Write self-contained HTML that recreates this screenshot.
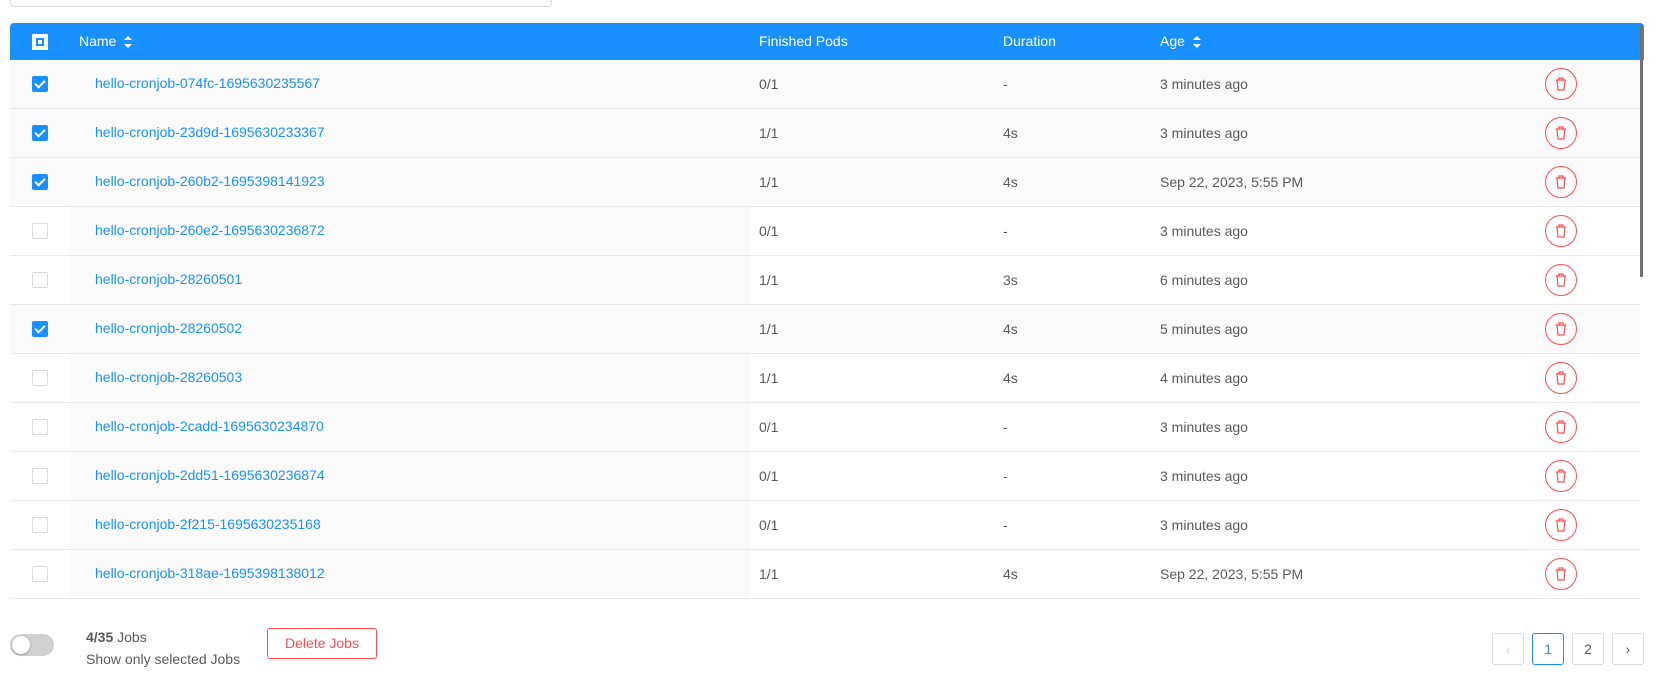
<!DOCTYPE html>
<html><head><style>
*{box-sizing:border-box;margin:0;padding:0}
body{width:1661px;height:685px;background:#fff;font-family:"Liberation Sans",sans-serif;font-size:14px;color:#595959;position:relative;overflow:hidden}
.abs{position:absolute}
.search{left:10px;top:-10px;width:542px;height:17px;border:1px solid #d9d9d9;border-radius:4px}
.head{left:10px;top:23px;width:1634px;height:37px;background:#1890ff;color:#fff;border-radius:4px 4px 0 0}
.head span{position:absolute;top:10px}
.hcb{position:absolute;left:22px;top:11px;width:16px;height:16px;background:#fff}
.hcb:after{content:"";position:absolute;left:4px;top:4px;width:8px;height:8px;border:2px solid #1890ff;box-sizing:border-box}
.sort{display:inline-block;vertical-align:middle;margin-left:8px;width:8px;height:12px;position:relative}
.sort:before,.sort:after{content:"";position:absolute;left:0;border-left:4px solid transparent;border-right:4px solid transparent}
.sort:before{top:0;border-bottom:4px solid #fff}
.sort:after{bottom:0;border-top:4px solid #fff}
.row{position:absolute;left:10px;width:1630px;height:49px;border-bottom:1px solid #e8e8e8}
.row .namebg{position:absolute;left:60px;width:680px;top:0;bottom:0;background:#fafafa}
.row.sel{background:#fafafa}
.row span{position:absolute;top:16px}
.row span.c1{left:749px}.row span.c2{left:993px}.row span.c3{left:1150px}
.cb{position:absolute;left:22px;top:16px;width:16px;height:16px;border:1px solid #d9d9d9;border-radius:2px;background:#fff}
.sel .cb{background:#1890ff;border-color:#1890ff}
.sel .cb:after{content:"";position:absolute;left:4px;top:1px;width:4px;height:8px;border:solid #fff;border-width:0 2px 2px 0;transform:rotate(45deg)}
.row span.name{left:85px;color:#1890ff;top:15px}
.trash{position:absolute;left:1535px;top:8px;width:32px;height:32px;border:1px solid #ff4d4f;border-radius:50%}
.pg{position:absolute;top:633px;width:32px;height:32px;border:1px solid #d9d9d9;border-radius:3px;text-align:center;line-height:30px;color:#595959}
.scroll{left:1640px;top:25px;width:3px;height:252px;background:#707070}
</style></head><body>
<div class="abs search"></div>
<div class="abs head"><div class="hcb"></div><span style="left:69px">Name<i class="sort"></i></span><span style="left:749px">Finished Pods</span><span style="left:993px">Duration</span><span style="left:1150px">Age<i class="sort"></i></span></div>
<div class="abs scroll"></div>

<div class="row sel" style="top:60px"><div class="cb"></div><span class="name">hello-cronjob-074fc-1695630235567</span><span class="c1">0/1</span><span class="c2">-</span><span class="c3">3 minutes ago</span><div class="trash"><svg width="30" height="30" viewBox="0 0 30 30"><path d="M10 11h10M13 11V9h4v2M11 11l1 10h6l1-10" fill="none" stroke="#ff4d4f" stroke-width="1.2"/></svg></div></div>
<div class="row sel" style="top:109px"><div class="cb"></div><span class="name">hello-cronjob-23d9d-1695630233367</span><span class="c1">1/1</span><span class="c2">4s</span><span class="c3">3 minutes ago</span><div class="trash"><svg width="30" height="30" viewBox="0 0 30 30"><path d="M10 11h10M13 11V9h4v2M11 11l1 10h6l1-10" fill="none" stroke="#ff4d4f" stroke-width="1.2"/></svg></div></div>
<div class="row sel" style="top:158px"><div class="cb"></div><span class="name">hello-cronjob-260b2-1695398141923</span><span class="c1">1/1</span><span class="c2">4s</span><span class="c3">Sep 22, 2023, 5:55 PM</span><div class="trash"><svg width="30" height="30" viewBox="0 0 30 30"><path d="M10 11h10M13 11V9h4v2M11 11l1 10h6l1-10" fill="none" stroke="#ff4d4f" stroke-width="1.2"/></svg></div></div>
<div class="row" style="top:207px"><div class="namebg"></div><div class="cb"></div><span class="name">hello-cronjob-260e2-1695630236872</span><span class="c1">0/1</span><span class="c2">-</span><span class="c3">3 minutes ago</span><div class="trash"><svg width="30" height="30" viewBox="0 0 30 30"><path d="M10 11h10M13 11V9h4v2M11 11l1 10h6l1-10" fill="none" stroke="#ff4d4f" stroke-width="1.2"/></svg></div></div>
<div class="row" style="top:256px"><div class="namebg"></div><div class="cb"></div><span class="name">hello-cronjob-28260501</span><span class="c1">1/1</span><span class="c2">3s</span><span class="c3">6 minutes ago</span><div class="trash"><svg width="30" height="30" viewBox="0 0 30 30"><path d="M10 11h10M13 11V9h4v2M11 11l1 10h6l1-10" fill="none" stroke="#ff4d4f" stroke-width="1.2"/></svg></div></div>
<div class="row sel" style="top:305px"><div class="cb"></div><span class="name">hello-cronjob-28260502</span><span class="c1">1/1</span><span class="c2">4s</span><span class="c3">5 minutes ago</span><div class="trash"><svg width="30" height="30" viewBox="0 0 30 30"><path d="M10 11h10M13 11V9h4v2M11 11l1 10h6l1-10" fill="none" stroke="#ff4d4f" stroke-width="1.2"/></svg></div></div>
<div class="row" style="top:354px"><div class="namebg"></div><div class="cb"></div><span class="name">hello-cronjob-28260503</span><span class="c1">1/1</span><span class="c2">4s</span><span class="c3">4 minutes ago</span><div class="trash"><svg width="30" height="30" viewBox="0 0 30 30"><path d="M10 11h10M13 11V9h4v2M11 11l1 10h6l1-10" fill="none" stroke="#ff4d4f" stroke-width="1.2"/></svg></div></div>
<div class="row" style="top:403px"><div class="namebg"></div><div class="cb"></div><span class="name">hello-cronjob-2cadd-1695630234870</span><span class="c1">0/1</span><span class="c2">-</span><span class="c3">3 minutes ago</span><div class="trash"><svg width="30" height="30" viewBox="0 0 30 30"><path d="M10 11h10M13 11V9h4v2M11 11l1 10h6l1-10" fill="none" stroke="#ff4d4f" stroke-width="1.2"/></svg></div></div>
<div class="row" style="top:452px"><div class="namebg"></div><div class="cb"></div><span class="name">hello-cronjob-2dd51-1695630236874</span><span class="c1">0/1</span><span class="c2">-</span><span class="c3">3 minutes ago</span><div class="trash"><svg width="30" height="30" viewBox="0 0 30 30"><path d="M10 11h10M13 11V9h4v2M11 11l1 10h6l1-10" fill="none" stroke="#ff4d4f" stroke-width="1.2"/></svg></div></div>
<div class="row" style="top:501px"><div class="namebg"></div><div class="cb"></div><span class="name">hello-cronjob-2f215-1695630235168</span><span class="c1">0/1</span><span class="c2">-</span><span class="c3">3 minutes ago</span><div class="trash"><svg width="30" height="30" viewBox="0 0 30 30"><path d="M10 11h10M13 11V9h4v2M11 11l1 10h6l1-10" fill="none" stroke="#ff4d4f" stroke-width="1.2"/></svg></div></div>
<div class="row" style="top:550px"><div class="namebg"></div><div class="cb"></div><span class="name">hello-cronjob-318ae-1695398138012</span><span class="c1">1/1</span><span class="c2">4s</span><span class="c3">Sep 22, 2023, 5:55 PM</span><div class="trash"><svg width="30" height="30" viewBox="0 0 30 30"><path d="M10 11h10M13 11V9h4v2M11 11l1 10h6l1-10" fill="none" stroke="#ff4d4f" stroke-width="1.2"/></svg></div></div>

<div class="abs" style="left:10px;top:634px;width:44px;height:22px;border-radius:11px;background:#d0d0d0"><div style="position:absolute;left:2px;top:2px;width:18px;height:18px;border-radius:50%;background:#fff;box-shadow:0 1px 2px rgba(0,0,0,.3)"></div></div>
<div class="abs" style="left:86px;top:629px"><b>4/35</b> Jobs</div>
<div class="abs" style="left:86px;top:651px">Show only selected Jobs</div>
<div class="abs" style="left:267px;top:628px;width:110px;height:31px;border:1px solid #ff4d4f;border-radius:3px;color:#ff4d4f;text-align:center;line-height:29px">Delete Jobs</div>
<div class="pg" style="left:1492px;color:#ccc">&lsaquo;</div>
<div class="pg" style="left:1532px;border-color:#1890ff;color:#1890ff">1</div>
<div class="pg" style="left:1572px">2</div>
<div class="pg" style="left:1612px">&rsaquo;</div>
</body></html>
